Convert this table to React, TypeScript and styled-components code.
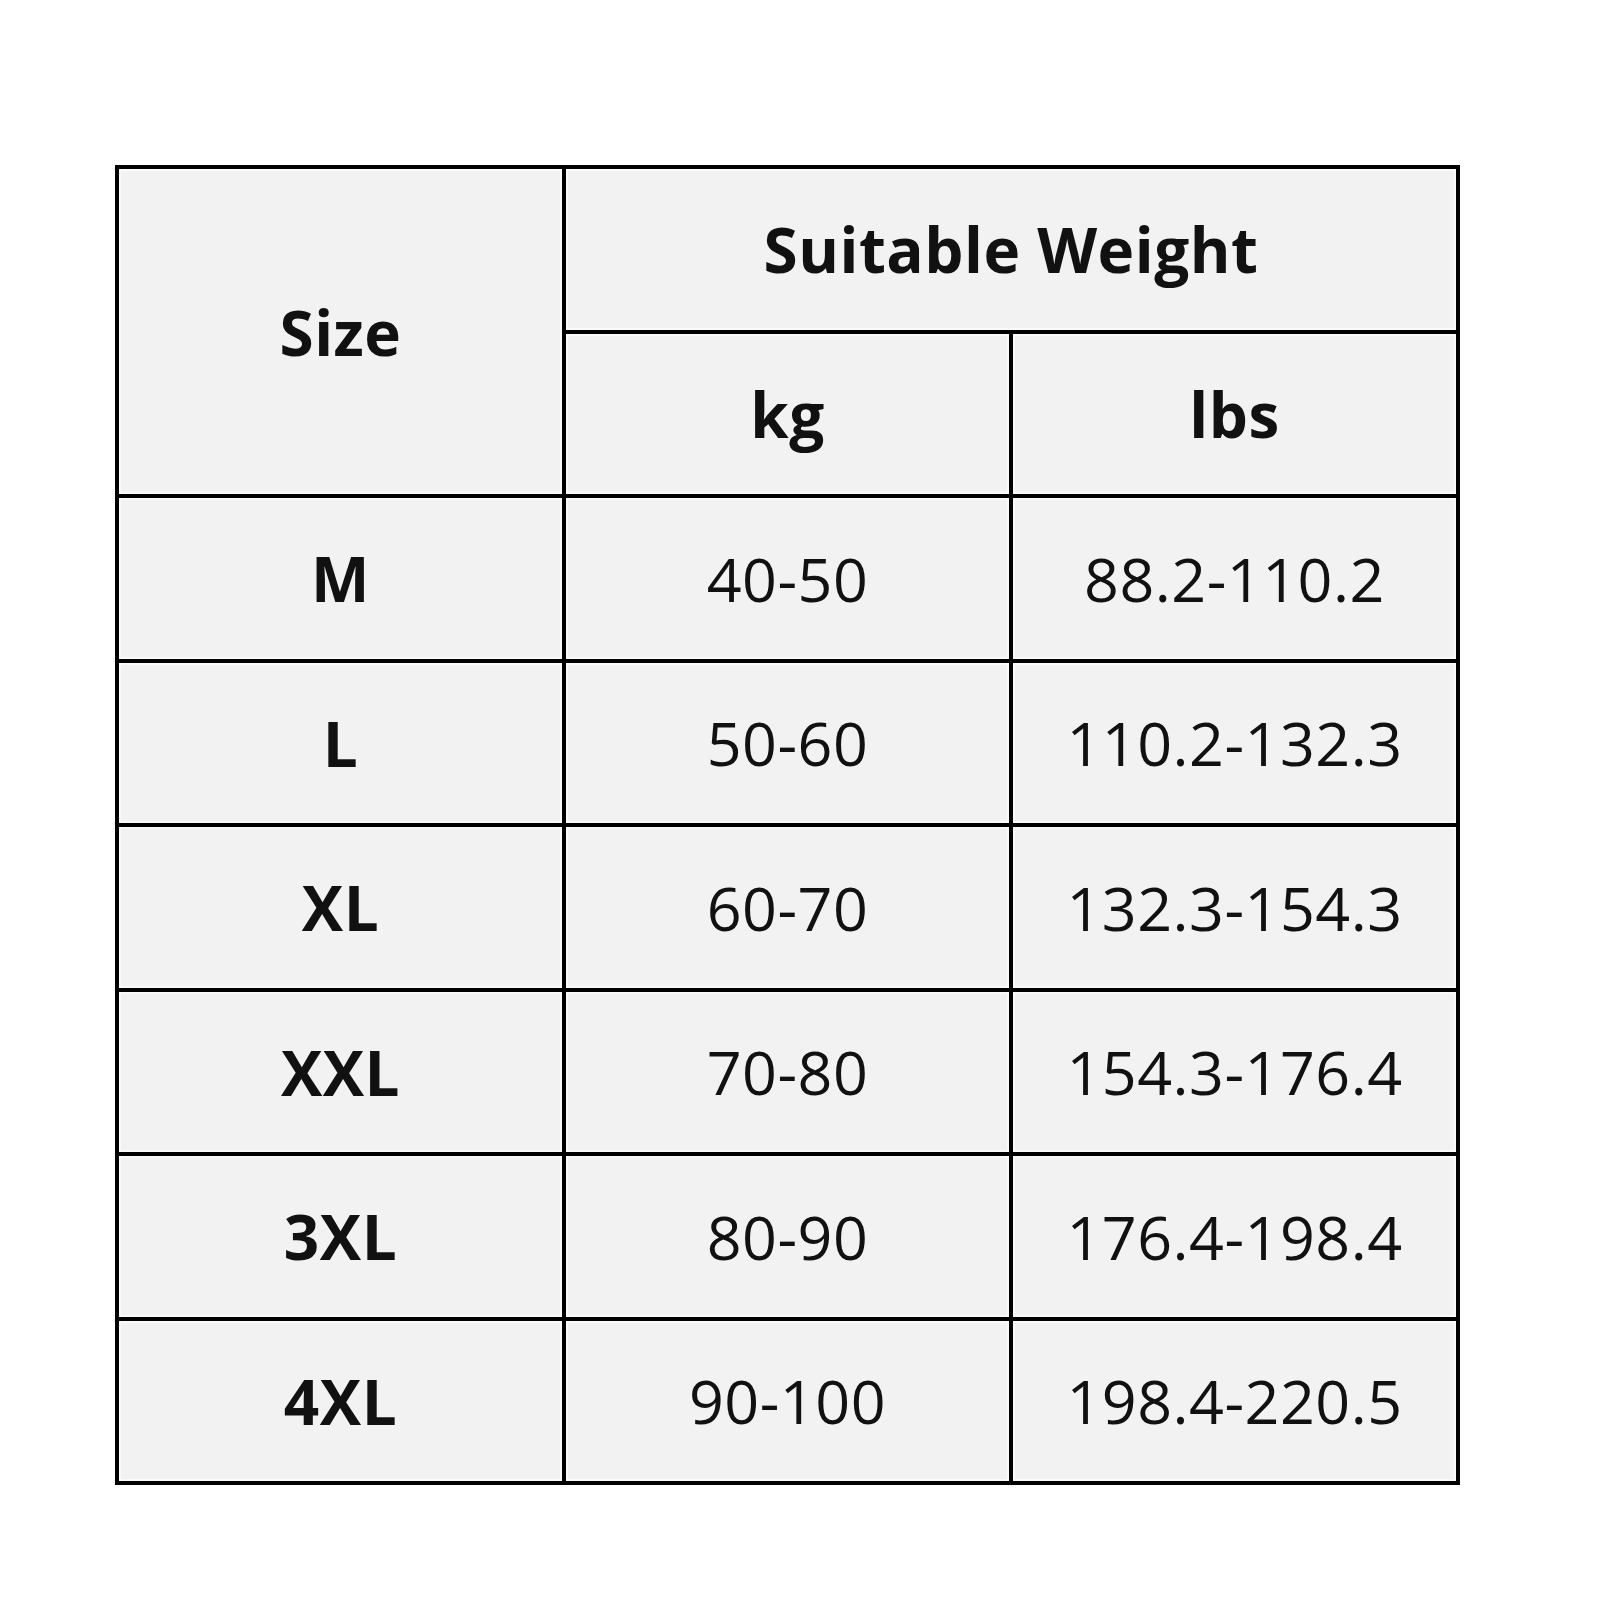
import styled, { createGlobalStyle } from "styled-components";

const GlobalStyle = createGlobalStyle`
  body {
    margin: 0;
    background: #ffffff;
    font-family: "Open Sans", "Liberation Sans", sans-serif;
  }
`;

const Page = styled.div`
  width: 1600px;
  height: 1600px;
  padding: 165px 0 0 115px;
  box-sizing: border-box;
`;

const Grid = styled.div`
  display: grid;
  grid-template-columns: repeat(3, 443px);
  grid-template-rows: repeat(8, 160.5px);
  gap: 4px;
  padding: 4px;
  background: #000000;
  width: max-content;
`;

const Cell = styled.div<{ $bold?: boolean; $col?: string; $row?: string }>`
  background: #f2f2f2;
  box-shadow: inset 0 0 0 2px #fafafa;
  display: flex;
  align-items: center;
  justify-content: center;
  color: #111111;
  font-size: ${(p) => (p.$bold ? "62px" : "61px")};
  font-weight: ${(p) => (p.$bold ? 700 : 400)};
  letter-spacing: 0.5px;
  grid-column: ${(p) => p.$col ?? "auto"};
  grid-row: ${(p) => p.$row ?? "auto"};
`;

const rows = [
  ["M", "40-50", "88.2-110.2"],
  ["L", "50-60", "110.2-132.3"],
  ["XL", "60-70", "132.3-154.3"],
  ["XXL", "70-80", "154.3-176.4"],
  ["3XL", "80-90", "176.4-198.4"],
  ["4XL", "90-100", "198.4-220.5"],
];

const App = () => {
  return (
    <>
      <GlobalStyle />
      <Page>
        <Grid>
          <Cell $bold $col="1" $row="1 / span 2">
            Size
          </Cell>
          <Cell $bold $col="2 / span 2" $row="1">
            Suitable Weight
          </Cell>
          <Cell $bold>kg</Cell>
          <Cell $bold>lbs</Cell>
          {rows.flatMap((r) => [
            <Cell $bold key={r[0]}>
              {r[0]}
            </Cell>,
            <Cell key={r[0] + "kg"}>{r[1]}</Cell>,
            <Cell key={r[0] + "lbs"}>{r[2]}</Cell>,
          ])}
        </Grid>
      </Page>
    </>
  );
};

export default App;
